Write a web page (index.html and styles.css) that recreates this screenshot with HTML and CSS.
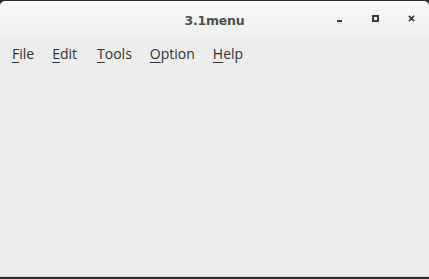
FILE: index.html
```html
<!DOCTYPE html>
<html lang="en">
<head>
  <meta charset="UTF-8">
  <title>3.1menu</title>
  <link rel="stylesheet" href="styles.css">
</head>
<body>
  <div class="window">
    <!-- Title bar -->
    <header class="titlebar">
      <span class="title">3.1menu</span>
      <div class="controls">
        <span class="ctl min"></span>
        <span class="ctl max"></span>
        <span class="ctl close">
          <svg width="8" height="8" viewBox="0 0 8 8"><path d="M1 1L7 7M7 1L1 7" stroke="#3d3d3d" stroke-width="2"/></svg>
        </span>
      </div>
    </header>

    <!-- Menu bar -->
    <nav class="menubar">
      <span class="item"><u>F</u>ile</span>
      <span class="item"><u>E</u>dit</span>
      <span class="item"><u>T</u>ools</span>
      <span class="item"><u>O</u>ption</span>
      <span class="item"><u>H</u>elp</span>
    </nav>

    <main class="content"></main>
  </div>
</body>
</html>
```

FILE: styles.css
```css
body { margin: 0; background: #2b2b2b; }
.window { width: 429px; height: 279px; box-sizing: border-box; display: flex; flex-direction: column; background: #ededed; border-top: 1px solid #2e2e2e; border-bottom: 2px solid #2a2a2a; border-radius: 6px 6px 0 0; overflow: hidden; }
.titlebar { height: 36px; flex: none; position: relative; display: flex; align-items: center; justify-content: center; background: linear-gradient(#fafafa, #efefef); }
.title { font-family: "DejaVu Sans", sans-serif; font-weight: bold; font-size: 12.5px; color: #4b4f50; margin-top: 2px; letter-spacing: -0.2px; }
.controls { position: absolute; right: 14px; top: 14px; display: flex; gap: 29px; align-items: center; }
.ctl { width: 7px; height: 7px; display: flex; align-items: center; justify-content: center; }
.min::after { content: ""; width: 5px; height: 2px; background: #3d3d3d; margin-top: 5px; }
.max::after { content: ""; width: 3px; height: 3px; border: 2px solid #3d3d3d; }
.close svg { width: 7px; height: 7px; }
.menubar { display: flex; padding: 7px 0 0 12px; gap: 18px; font-family: "Open Sans", sans-serif; font-size: 14px; color: #2e3436; }
.item:nth-child(3) { margin-left: 2px; }
.item u { text-underline-offset: 3px; }
.content { flex: 1; border-bottom: 1px solid #d8d8d8; }
```
